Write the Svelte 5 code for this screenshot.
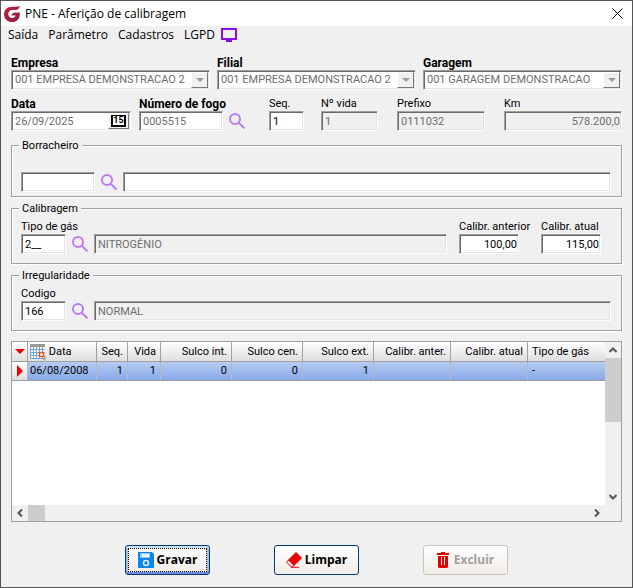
<script>
    const menus = ["Saída", "Parâmetro", "Cadastros", "LGPD"];

    const combos = [
        { id: "empresa", label: "Empresa", value: "001 EMPRESA DEMONSTRACAO 2" },
        { id: "filial", label: "Filial", value: "001 EMPRESA DEMONSTRACAO 2" },
        { id: "garagem", label: "Garagem", value: "001 GARAGEM DEMONSTRACAO" },
    ];

    const columns = [
        { label: "Data", cls: "date" },
        { label: "Seq.", cls: "seq num" },
        { label: "Vida", cls: "vida num" },
        { label: "Sulco int.", cls: "sulco num" },
        { label: "Sulco cen.", cls: "sulco num" },
        { label: "Sulco ext.", cls: "sulco num" },
        { label: "Calibr. anter.", cls: "calibr num" },
        { label: "Calibr. atual", cls: "calibr num" },
        { label: "Tipo de gás", cls: "gas" },
    ];

    const rows = [["06/08/2008", "1", "1", "0", "0", "1", "", "", "-"]];

    let numero = $state("0005515");
    let seq = $state("1");
    let borracheiro = $state("");
    let nomeBorracheiro = $state("");
    let gas = $state("2__");
    let anterior = $state("100,00");
    let atual = $state("115,00");
    let codigo = $state("166");
</script>

{#snippet search(label)}
    <button class="search" type="button" aria-label={label}>
        <svg viewBox="0 0 16 16" width="16" height="16">
            <circle cx="6" cy="6" r="5" />
            <path d="M9.6 9.6 15.4 15.4" />
        </svg>
    </button>
{/snippet}

{#snippet chevron(d)}
    <svg viewBox="0 0 8 8" width="8" height="8"><path {d} /></svg>
{/snippet}

<div class="window">
    <header class="titlebar">
        <svg class="logo" viewBox="0 0 16 16" width="16" height="16">
            <defs>
                <linearGradient id="brand" x1="0" y1="0" x2="1" y2="1">
                    <stop offset="0" stop-color="#c41f3e" />
                    <stop offset="1" stop-color="#8d1c40" />
                </linearGradient>
            </defs>
            <path
                fill="url(#brand)"
                d="M16 0C15.3 2.6 13.6 4 11 4H8.4C5.8 4 4.2 5.7 4.2 8s1.6 4 3.9 4c1.9 0 3.1-.9 3.5-2.4H7.4C7.900 7.6 9.2 6.6 11.2 6.6H15.8V8.2C15.8 12.9 12.7 16 8.1 16 3.4 16 0 12.7 0 8.200 0 3.7 3.4.7 8 .7h4.200C13.8.7 15 .5 16 0Z"
            />
        </svg>
        <h1>PNE - Aferição de calibragem</h1>
        <button class="close" type="button" aria-label="Fechar">
            <svg viewBox="0 0 11 11" width="11" height="11">
                <path d="M.5.5l10 10M10.5.5l-10 10" />
            </svg>
        </button>
    </header>

    <nav class="menu">
        {#each menus as item}
            <button type="button">{item}</button>
        {/each}
        <button type="button" class="monitor" aria-label="Monitor">
            <svg viewBox="0 0 16 14" width="16" height="14">
                <path d="M1 1h14v10H1z" fill="none" stroke="#8a0fe0" stroke-width="2" />
                <path d="M5 12h6v2H5z" fill="#8a0fe0" />
            </svg>
        </button>
    </nav>

    <main>
        <div class="combos">
            {#each combos as combo}
                <div class="field">
                    <label class="strong" for={combo.id}>{combo.label}</label>
                    <div class="sunken combo">
                        <select id={combo.id} disabled>
                            <option>{combo.value}</option>
                        </select>
                        <span class="drop"></span>
                    </div>
                </div>
            {/each}
        </div>

        <div class="details">
            <div class="field">
                <label class="strong" for="data">Data</label>
                <div class="sunken combo date-box">
                    <input id="data" value="26/09/2025" disabled />
                    <button class="calendar" type="button"><span>15</span></button>
                </div>
            </div>
            <div class="field">
                <label class="strong" for="numero">Número de fogo</label>
                <div class="line">
                    <input id="numero" class="sunken numero" bind:value={numero} />
                    {@render search("Pesquisar número de fogo")}
                </div>
            </div>
            <div class="field">
                <label for="seq">Seq.</label>
                <input id="seq" class="sunken seq-box" bind:value={seq} />
            </div>
            <div class="field">
                <label for="vida">Nº vida</label>
                <input id="vida" class="sunken vida-box" value="1" disabled />
            </div>
            <div class="field">
                <label for="prefixo">Prefixo</label>
                <input id="prefixo" class="sunken prefixo" value="0111032" disabled />
            </div>
            <div class="field">
                <label for="km">Km</label>
                <input id="km" class="sunken right" value="578.200,0" disabled />
            </div>
        </div>

        <fieldset class="first">
            <legend>Borracheiro</legend>
            <div class="line">
                <input class="sunken borracheiro" aria-label="Borracheiro" bind:value={borracheiro} />
                {@render search("Pesquisar borracheiro")}
                <input class="sunken grow" aria-label="Nome do borracheiro" bind:value={nomeBorracheiro} />
            </div>
        </fieldset>

        <fieldset>
            <legend>Calibragem</legend>
            <div class="line">
                <div class="field code">
                    <label for="gas">Tipo de gás</label>
                    <input id="gas" class="sunken" bind:value={gas} />
                </div>
                {@render search("Pesquisar tipo de gás")}
                <input class="sunken grow" aria-label="Descrição do gás" value="NITROGÊNIO" disabled />
                <div class="field pressure">
                    <label for="anterior">Calibr. anterior</label>
                    <input id="anterior" class="sunken right" bind:value={anterior} />
                </div>
                <div class="field pressure">
                    <label for="atual">Calibr. atual</label>
                    <input id="atual" class="sunken right" bind:value={atual} />
                </div>
            </div>
        </fieldset>

        <fieldset>
            <legend>Irregularidade</legend>
            <div class="line">
                <div class="field code">
                    <label for="codigo">Codigo</label>
                    <input id="codigo" class="sunken" bind:value={codigo} />
                </div>
                {@render search("Pesquisar irregularidade")}
                <input class="sunken grow" aria-label="Descrição da irregularidade" value="NORMAL" disabled />
            </div>
        </fieldset>

        <section class="grid">
            <div class="view">
                <table>
                    <thead>
                        <tr>
                            <th class="mark"><span class="down"></span></th>
                            {#each columns as col, i}
                                <th class={col.cls}>
                                    {#if i === 0}
                                        <svg viewBox="0 0 16 16" width="16" height="16">
                                            <path d="M0 1h15v14H0z" fill="#fff" />
                                            <path d="M0 0h15v3H0z" fill="#9a9a9a" />
                                            <path
                                                d="M.5 3v11.5M3.5 3v11.5M6.5 3v11.5M9.5 3v11.5M12.5 3v11.5M0 5.5h15M0 8.5h15M0 11.5h15M0 14.5h12"
                                                fill="none"
                                                stroke="#6fa5dc"
                                            />
                                            <path d="M9.5 8.5h4v4h-4z" fill="#fff" stroke="#f0561c" stroke-width="1.5" />
                                            <path d="M12 15.5h3.5V12z" fill="#8a8a8a" />
                                        </svg>
                                    {/if}
                                    {col.label}
                                </th>
                            {/each}
                        </tr>
                    </thead>
                    <tbody>
                        {#each rows as row}
                            <tr>
                                <td class="mark"><span class="current"></span></td>
                                {#each row as cell, i}
                                    <td class={columns[i].cls}>{cell}</td>
                                {/each}
                            </tr>
                        {/each}
                    </tbody>
                </table>
            </div>
            <div class="scroll vertical">
                <button type="button" aria-label="Acima">{@render chevron("M0.5 6 4 2.5 7.5 6")}</button>
                <span class="thumb"></span>
                <button type="button" aria-label="Abaixo">{@render chevron("M0.5 2 4 5.5 7.5 2")}</button>
            </div>
            <div class="scroll horizontal">
                <button type="button" aria-label="Esquerda">{@render chevron("M6 0.5 2.5 4 6 7.5")}</button>
                <span class="thumb"></span>
                <button type="button" aria-label="Direita">{@render chevron("M2 0.5 5.5 4 2 7.5")}</button>
            </div>
        </section>
    </main>

    <footer>
        <button class="action default" type="button">
            <svg viewBox="0 0 16 16" width="16" height="16">
                <path d="M0 0h14l2 2v14H0z" fill="#0b86e8" />
                <path d="M2 1h10v5H2z" fill="#8cc8f8" />
                <path d="M4 2h7v3H4z" fill="#e8f5ff" />
                <circle cx="8" cy="11" r="2.5" fill="none" stroke="#d8eeff" stroke-width="1.5" />
            </svg>
            <span>Gravar</span>
        </button>
        <button class="action" type="button">
            <svg viewBox="0 0 16 16" width="16" height="16">
                <path d="M10 .5 15.5 6 8 13.5 2.5 8z" fill="#e60000" stroke="#e60000" stroke-linejoin="round" />
                <path d="M2.6 8 .7 10.2 5 14.8H6.5L8 13.4M5 15.3h8" fill="none" stroke="#e60000" />
            </svg>
            <span>Limpar</span>
        </button>
        <button class="action" type="button" disabled>
            <svg viewBox="0 0 12 16" width="12" height="16">
                <path d="M0 1h4V0h4v1h4v2H0zM1 4h10v11l-1 1H2l-1-1z" fill="#e60000" />
                <path d="M4.5 5v8M7.5 5v8" stroke="#fff" />
            </svg>
            <span>Excluir</span>
        </button>
    </footer>
</div>

<style>
    :global(body) {
        background: #f0f0f0;
    }
    .window {
        box-sizing: border-box;
        display: flex;
        flex-direction: column;
        min-height: 100vh;
        border: 1px solid #555;
        background: #f0f0f0;
        color: #000;
        font-family: Roboto, sans-serif;
        font-size: 11px;
        line-height: 14px;
    }
    button,
    input,
    select {
        box-sizing: border-box;
        margin: 0;
        padding: 0;
        border: 0;
        border-radius: 0;
        background: none;
        color: inherit;
        font: inherit;
    }
    svg {
        display: block;
        flex: none;
    }

    .titlebar {
        display: flex;
        align-items: center;
        height: 25px;
        padding: 0 9px 0 3px;
        background: #fff;
        font-family: "Open Sans", sans-serif;
    }
    h1 {
        flex: 1;
        margin: 0 0 0 5px;
        font-size: 12px;
        font-weight: 400;
    }
    .close path {
        fill: none;
        stroke: #000;
    }
    .menu {
        display: flex;
        align-items: center;
        gap: 10px;
        height: 18px;
        padding: 0 7px;
        font-family: "Open Sans", sans-serif;
        font-size: 12px;
    }
    .monitor {
        margin-left: -4px;
    }

    main {
        display: flex;
        flex: 1;
        flex-direction: column;
        padding: 12px 10px 0;
    }
    .combos {
        display: grid;
        grid-template-columns: repeat(3, 1fr);
        gap: 7px;
    }
    .details {
        display: grid;
        grid-template-columns: 128px 130px 52px 76px 107px 1fr;
        margin-top: 7px;
    }
    .field {
        display: flex;
        flex-direction: column;
        min-width: 0;
    }
    label {
        height: 14px;
        white-space: nowrap;
    }
    .strong {
        font-size: 12px;
        font-weight: 700;
    }
    .sunken {
        min-width: 0;
        height: 20px;
        padding: 0 3px;
        border: 1px solid;
        border-color: #a0a0a0 #fff #fff #a0a0a0;
        background: #fff;
        box-shadow:
            inset 1px 1px 0 #696969,
            inset -1px -1px 0 #e3e3e3;
    }
    .sunken:disabled {
        background: #f0f0f0;
        color: #6d6d6d;
    }
    .combo {
        display: flex;
        box-sizing: border-box;
        padding: 1px 1px 1px 3px;
        color: #6d6d6d;
    }
    .combo select,
    .combo input {
        flex: 1;
        min-width: 0;
        height: 16px;
        appearance: none;
        color: #6d6d6d;
        opacity: 1;
    }
    .drop,
    .calendar {
        display: flex;
        align-items: center;
        justify-content: center;
        box-sizing: border-box;
        width: 17px;
        height: 16px;
        border: 1px solid;
        border-color: #fff #777 #777 #fff;
        background: #f0f0f0;
    }
    .drop::after {
        border: 4px solid transparent;
        border-top-color: #9a9a9a;
        border-bottom: 0;
        content: "";
    }
    .date-box {
        width: 120px;
    }
    .calendar {
        width: 21px;
    }
    .calendar span {
        box-sizing: border-box;
        width: 15px;
        height: 12px;
        border: 1px solid #000;
        border-width: 1px 2px 2px 2px;
        background: #fff;
        color: #000;
        font-size: 9px;
        font-weight: 700;
        line-height: 9px;
        text-align: center;
    }
    .line {
        display: flex;
        align-items: flex-end;
        gap: 6px;
    }
    .numero {
        width: 84px;
        color: #6d6d6d;
    }
    .seq-box {
        width: 35px;
    }
    .vida-box {
        width: 57px;
    }
    .prefixo {
        width: 88px;
    }
    .right {
        padding-right: 1px;
        text-align: right;
    }
    .borracheiro {
        width: 74px;
    }
    .grow {
        flex: 1;
    }
    .code {
        width: 45px;
    }
    .pressure {
        width: 70px;
        margin-left: 6px;
    }
    .pressure input {
        width: 60px;
    }
    .search {
        display: flex;
        align-items: center;
        height: 20px;
    }
    .search svg {
        fill: none;
        stroke: #bb7cee;
        stroke-width: 2;
    }

    fieldset {
        min-width: 0;
        margin: 5px 0 0;
        padding: 6px 10px 9px 9px;
        border: 1px solid #a0a0a0;
        box-shadow:
            1px 1px 0 #fff,
            inset 1px 1px 0 #fff;
    }
    .first {
        margin-top: 8px;
        padding-top: 21px;
        padding-bottom: 4px;
    }
    legend {
        height: 12px;
        margin-left: -2px;
        padding: 0 3px;
        background: #f0f0f0;
        line-height: 14px;
    }

    .grid {
        display: grid;
        flex: 1;
        grid-template-rows: 1fr 16px;
        grid-template-columns: 1fr 16px;
        margin-top: 10px;
        border: 1px solid #a0a0a0;
        background: #f0f0f0;
    }
    .view {
        min-width: 0;
        overflow: hidden;
        background: #fff;
    }
    table {
        width: 100%;
        border-collapse: separate;
        border-spacing: 0;
        table-layout: fixed;
    }
    th,
    td {
        box-sizing: border-box;
        height: 20px;
        padding: 0 2px;
        overflow: hidden;
        border-right: 1px solid #a0a0a0;
        border-bottom: 1px solid #a0a0a0;
        font-weight: 400;
        text-align: left;
        white-space: nowrap;
    }
    th {
        background: linear-gradient(#fff, #dedede);
    }
    td {
        height: 19px;
        border-right-color: #b8b8b8;
        background: linear-gradient(#b6ccf3, #87a8e8);
    }
    td.mark {
        background: linear-gradient(#fff, #dedede);
    }
    .mark {
        width: 16px;
    }
    .mark span {
        display: block;
        width: 0;
        height: 0;
        margin: auto;
        border: 5px solid transparent;
    }
    .mark .down {
        border-top-color: #e60000;
        border-bottom: 0;
    }
    .mark .current {
        border-width: 6px 0 6px 6px;
        border-left-color: #e60000;
    }
    .date {
        width: 69px;
    }
    th.date svg {
        display: inline-block;
        vertical-align: middle;
    }
    .seq {
        width: 31px;
    }
    .vida {
        width: 33px;
    }
    .sulco {
        width: 71px;
    }
    .calibr {
        width: 77px;
    }
    .num {
        padding-right: 4px;
        text-align: right;
    }
    .gas {
        padding-left: 4px;
    }
    th:last-child,
    td:last-child {
        border-right: 0;
    }

    .scroll {
        display: flex;
    }
    .scroll button {
        display: flex;
        align-items: center;
        justify-content: center;
        width: 16px;
        height: 16px;
    }
    .scroll path {
        fill: none;
        stroke: #555;
        stroke-width: 2;
    }
    .scroll button:last-child {
        margin-left: auto;
    }
    .vertical {
        flex-direction: column;
    }
    .vertical button:last-child {
        margin-top: auto;
    }
    .thumb {
        background: #cdcdcd;
    }
    .vertical .thumb {
        height: 64px;
    }
    .horizontal .thumb {
        width: 17px;
    }

    footer {
        display: flex;
        justify-content: center;
        gap: 64px;
        padding: 23px 0 12px;
    }
    .action {
        display: flex;
        align-items: center;
        justify-content: center;
        gap: 3px;
        width: 85px;
        height: 30px;
        border: 1px solid #003c74;
        border-radius: 3px;
        background: linear-gradient(#fff, #f0ebe6);
        font-family: "Open Sans", sans-serif;
        font-size: 12px;
        font-weight: 700;
    }
    .default {
        box-shadow:
            inset 0 2px 0 #cee0fa,
            inset 0 -2px 0 #7189e0,
            inset 2px 0 0 #a5bcf0,
            inset -2px 0 0 #a5bcf0;
        outline: 1px dotted #000;
        outline-offset: -4px;
    }
    .action:disabled {
        gap: 5px;
        border-color: #c9c5bd;
        color: #a0a0a0;
    }
</style>
